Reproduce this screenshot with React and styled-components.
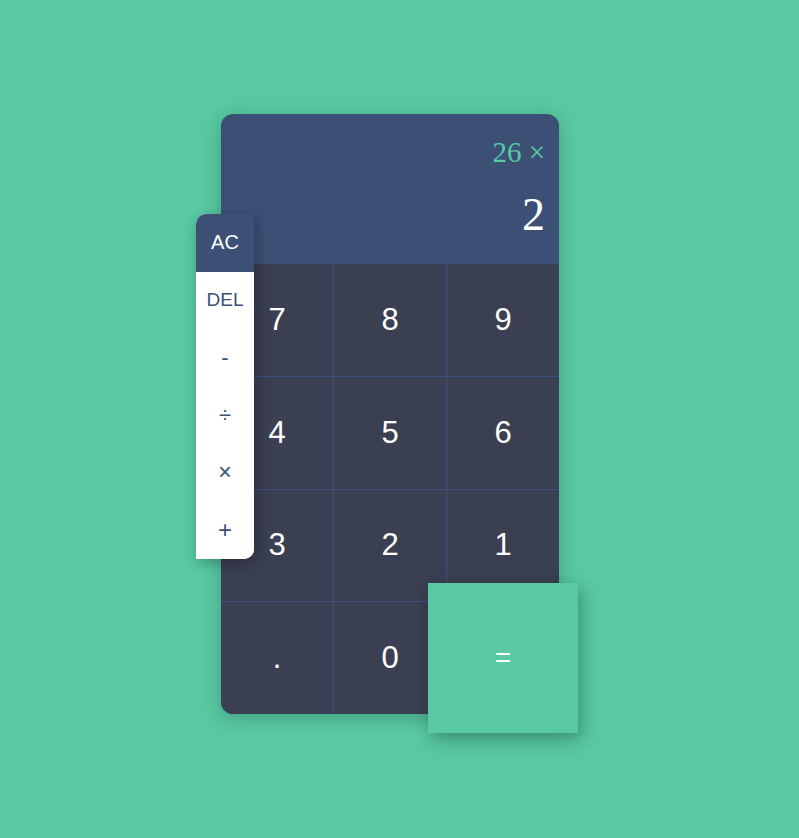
import React from "react";
import styled, { createGlobalStyle } from "styled-components";

const Global = createGlobalStyle`
  html, body { margin: 0; padding: 0; background: #58c9a2; }
  body { font-family: "Liberation Sans", Arial, sans-serif; }
`;

const Page = styled.div`
  width: 799px;
  height: 838px;
  box-sizing: border-box;
  padding: 114px 0 0 221px;
  background: #58c9a2;
`;

const Calculator = styled.div`
  position: relative;
  width: 338px;
  height: 600px;
  border-radius: 12px;
  overflow: visible;
  box-shadow: 0 4px 18px rgba(0, 0, 0, 0.22);
  display: flex;
  flex-direction: column;
`;

const Display = styled.div`
  height: 150px;
  background: #3c5076;
  border-radius: 12px 12px 0 0;
  display: flex;
  flex-direction: column;
  align-items: flex-end;
  padding: 20px 14px 0 0;
  box-sizing: border-box;
  font-family: "Liberation Serif", "Times New Roman", serif;
`;

const Previous = styled.div`
  color: #58c9a2;
  font-size: 29px;
  line-height: 36px;
`;

const Current = styled.div`
  color: #ffffff;
  font-size: 46px;
  line-height: 56px;
  margin-top: 17px;
`;

const Keys = styled.div`
  flex: 1;
  display: grid;
  grid-template-columns: repeat(3, 1fr);
  grid-template-rows: repeat(4, 1fr);
  gap: 1px;
  background: #3d5180;
  border-radius: 0 0 12px 12px;
  overflow: hidden;
`;

const Key = styled.div`
  background: #3a3f51;
  color: #ffffff;
  font-size: 31px;
  display: flex;
  align-items: center;
  justify-content: center;
`;

const Operators = styled.div`
  position: absolute;
  left: -25px;
  top: 100px;
  width: 58px;
  display: flex;
  flex-direction: column;
  background: #ffffff;
  border-radius: 10px 0 10px 0;
  overflow: hidden;
  box-shadow: 2px 4px 14px rgba(0, 0, 0, 0.28);
`;

const Op = styled.div`
  height: 57.5px;
  display: flex;
  align-items: center;
  justify-content: center;
  background: ${(p) => (p.$primary ? "#3c5076" : "#ffffff")};
  color: ${(p) => (p.$primary ? "#ffffff" : "#3c5076")};
  font-size: ${(p) => p.$size || 20}px;
`;

const Equals = styled.div`
  position: absolute;
  left: 207px;
  top: 469px;
  width: 150px;
  height: 150px;
  background: #58c9a2;
  color: #ffffff;
  font-size: 28px;
  display: flex;
  align-items: center;
  justify-content: center;
  box-shadow: 3px 6px 16px rgba(0, 0, 0, 0.3);
`;

const digits = ["7", "8", "9", "4", "5", "6", "3", "2", "1", ".", "0", ""];

export default function App() {
  return (
    <Page>
      <Global />
      <Calculator>
        <Display>
          <Previous>26 ×</Previous>
          <Current>2</Current>
        </Display>
        <Keys>
          {digits.map((d, i) => (
            <Key key={i}>{d}</Key>
          ))}
        </Keys>
        <Operators>
          <Op $primary>AC</Op>
          <Op $size={19}>DEL</Op>
          <Op $size={22}>-</Op>
          <Op $size={22}>÷</Op>
          <Op $size={23}>×</Op>
          <Op $size={24}>+</Op>
        </Operators>
        <Equals>=</Equals>
      </Calculator>
    </Page>
  );
}
